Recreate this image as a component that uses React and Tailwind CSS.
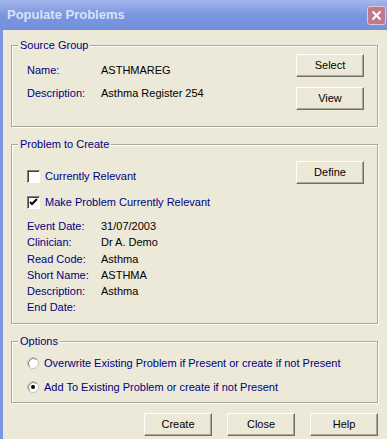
const font = { fontFamily: '"Liberation Sans", Arial, sans-serif' };

function Btn({ children, className = "" }) {
  return (
    <button
      type="button"
      className={`flex h-[23px] w-[68px] items-center justify-center border border-t-white border-l-white border-b-[#716f64] border-r-[#716f64] bg-[#ece9d8] text-[11px] text-black shadow-[inset_-1px_-1px_0_#aca899] ${className}`}
    >
      {children}
    </button>
  );
}

function Group({ title, className = "", children }) {
  return (
    <div
      className={`relative border border-[#aca899] shadow-[inset_1px_1px_0_#fff,1px_1px_0_#fff] ${className}`}
    >
      <span className="absolute -top-[8px] left-[6px] bg-[#ece9d8] px-[2px] text-[11px] leading-[14px] text-[#000080]">
        {title}
      </span>
      {children}
    </div>
  );
}

function Check({ checked }) {
  return (
    <span className="flex h-[13px] w-[13px] items-center justify-center border border-t-[#808080] border-l-[#808080] border-b-white border-r-white bg-white shadow-[inset_1px_1px_0_#404040]">
      {checked && (
        <svg width="9" height="9" viewBox="0 0 9 9">
          <path d="M1 4 L3 6 L8 1" stroke="#000" strokeWidth="2" fill="none" />
        </svg>
      )}
    </span>
  );
}

function Radio({ checked }) {
  return (
    <svg width="12" height="12" viewBox="0 0 12 12">
      <circle cx="6" cy="6" r="5.5" fill="#fff" stroke="#c0c0c0" />
      <path d="M2.5 9.5 A5 5 0 0 1 9.5 2.5" stroke="#808080" fill="none" />
      {checked && <circle cx="6" cy="6" r="2" fill="#000" />}
    </svg>
  );
}

function Row({ label, value }) {
  return (
    <div className="flex h-[16.3px] items-center text-[11px]">
      <span className="w-[74px] text-[#000080]">{label}</span>
      <span className="text-black">{value}</span>
    </div>
  );
}

export default function App() {
  return (
    <div className="flex h-[439px] w-[387px] flex-col overflow-hidden bg-[#ece9d8]" style={font}>
      <div className="flex h-[30px] shrink-0 items-center justify-between bg-gradient-to-b from-[#a4b7ee] via-[#7b96df] to-[#7390dc] pl-[7px] pr-[1px]">
        <span className="text-[13px] font-bold text-[#d8e4f8]">Populate Problems</span>
        <span className="flex h-[19px] w-[19px] items-center justify-center rounded-[3px] border border-[#e6c6d2] bg-[#c17a8c]">
          <svg width="11" height="11" viewBox="0 0 11 11">
            <path d="M1.5 1.5 L9.5 9.5 M9.5 1.5 L1.5 9.5" stroke="#fff" strokeWidth="2" />
          </svg>
        </span>
      </div>

      <div className="flex flex-1">
        <div className="w-[3px] bg-[#7b96df]" />
        <div className="flex flex-1 flex-col pl-[8px] pr-[9px] pt-[15px]">
          <Group title="Source Group" className="h-[82px]">
            <div className="flex pl-[15px] pr-[13px] pt-[8px]">
              <div className="flex flex-1 flex-col pt-[8px]">
                <Row label="Name:" value="ASTHMAREG" />
                <div className="h-[7px]" />
                <Row label="Description:" value="Asthma Register 254" />
              </div>
              <div className="flex flex-col gap-[10px]">
                <Btn>Select</Btn>
                <Btn>View</Btn>
              </div>
            </div>
          </Group>

          <Group title="Problem to Create" className="mt-[17px] h-[180px]">
            <div className="flex pl-[15px] pr-[13px] pt-[16px]">
              <div className="flex flex-1 flex-col pt-[8px]">
                <div className="flex h-[14px] items-center gap-[5px] text-[11px] text-[#000080]">
                  <Check />
                  <span>Currently Relevant</span>
                </div>
                <div className="mt-[12px] flex h-[14px] items-center gap-[5px] text-[11px] text-[#000080]">
                  <Check checked />
                  <span>Make Problem Currently Relevant</span>
                </div>
                <div className="mt-[9px] flex flex-col">
                  <Row label="Event Date:" value="31/07/2003" />
                  <Row label="Clinician:" value="Dr A. Demo" />
                  <Row label="Read Code:" value="Asthma" />
                  <Row label="Short Name:" value="ASTHMA" />
                  <Row label="Description:" value="Asthma" />
                  <Row label="End Date:" value="" />
                </div>
              </div>
              <div>
                <Btn>Define</Btn>
              </div>
            </div>
          </Group>

          <Group title="Options" className="mt-[17px] h-[62px]">
            <div className="flex flex-col gap-[10px] pl-[15px] pt-[14px] text-[11px] text-[#000080]">
              <div className="flex h-[14px] items-center gap-[5px]">
                <Radio />
                <span>Overwrite Existing Problem if Present or create if not Present</span>
              </div>
              <div className="flex h-[14px] items-center gap-[5px]">
                <Radio checked />
                <span>Add To Existing Problem or create if not Present</span>
              </div>
            </div>
          </Group>

          <div className="mt-[10px] flex justify-end gap-[15px]">
            <Btn>Create</Btn>
            <Btn>Close</Btn>
            <Btn>Help</Btn>
          </div>
        </div>
      </div>
    </div>
  );
}
